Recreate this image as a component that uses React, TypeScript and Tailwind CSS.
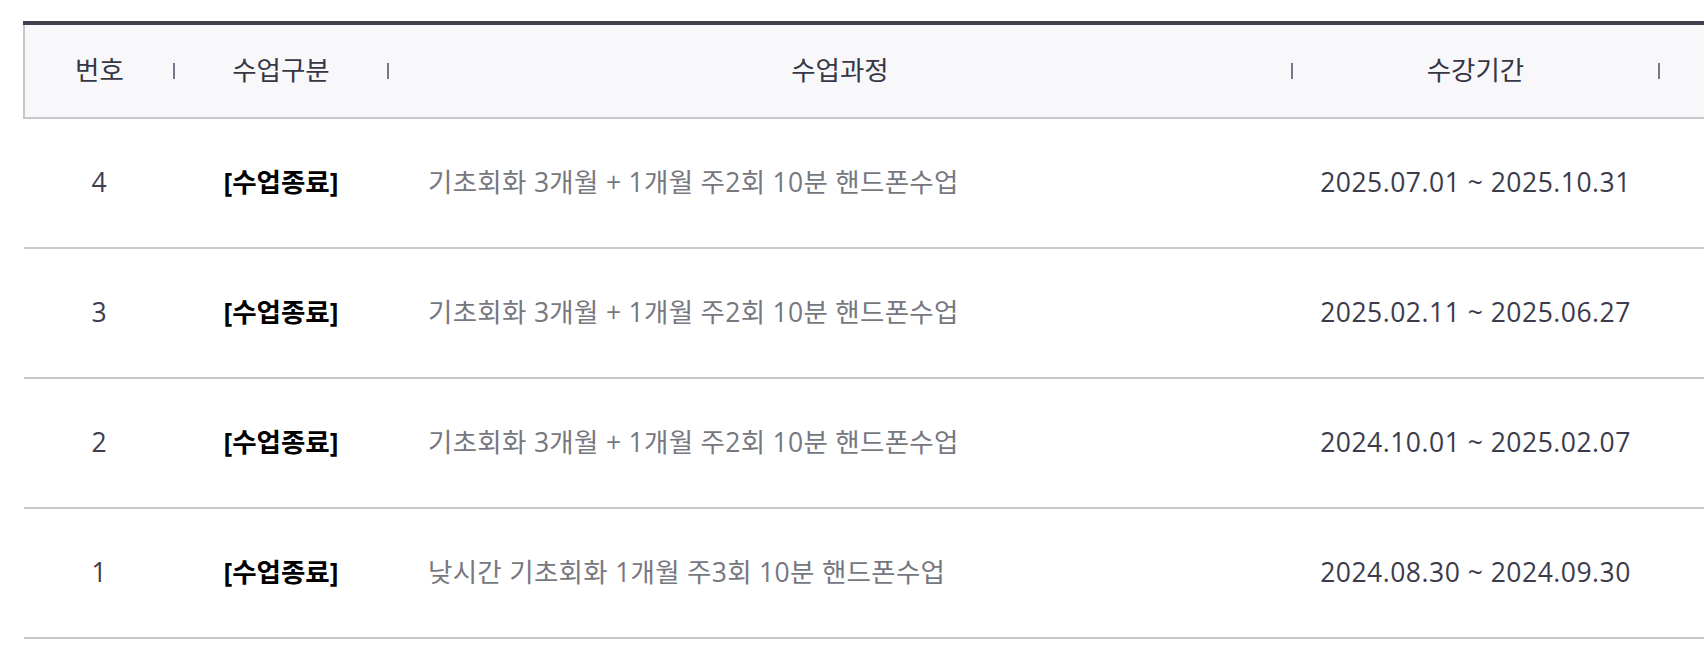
import React from 'react';

type Row = { no: number; status: string; course: string; period: string };

const rows: Row[] = [
  { no: 4, status: '[수업종료]', course: '기초회화 3개월 + 1개월 주2회 10분 핸드폰수업', period: '2025.07.01 ~ 2025.10.31' },
  { no: 3, status: '[수업종료]', course: '기초회화 3개월 + 1개월 주2회 10분 핸드폰수업', period: '2025.02.11 ~ 2025.06.27' },
  { no: 2, status: '[수업종료]', course: '기초회화 3개월 + 1개월 주2회 10분 핸드폰수업', period: '2024.10.01 ~ 2025.02.07' },
  { no: 1, status: '[수업종료]', course: '낮시간 기초회화 1개월 주3회 10분 핸드폰수업', period: '2024.08.30 ~ 2024.09.30' },
];

const heads = ['번호', '수업구분', '수업과정', '수강기간', ''];

const App: React.FC = () => {
  return (
    <div className="w-[1704px] h-[660px] bg-white overflow-hidden pt-[21px] pl-[23px] font-['Open_Sans','Noto_Sans_CJK_KR',sans-serif]">
      <table className="table-fixed border-collapse w-[1900px]">
        <colgroup>
          <col className="w-[150px]" />
          <col className="w-[214px]" />
          <col className="w-[904px]" />
          <col className="w-[367px]" />
          <col className="w-[265px]" />
        </colgroup>
        <thead>
          <tr className="bg-[#f8f8fa] border-t-4 border-t-[#40404f] border-b-2 border-b-[#c8c7cc] border-l-2 border-l-[#c8c7cc]">
            {heads.map((h, i) => (
              <th key={i} className="relative h-[95px] p-0 text-center text-[26.5px] font-normal text-[#363646]">
                {h}
                {i < 4 && (
                  <span className="absolute right-[-1px] top-1/2 -translate-y-1/2 w-[2px] h-4 bg-[#77778a]"></span>
                )}
              </th>
            ))}
          </tr>
        </thead>
        <tbody>
          {rows.map((r) => (
            <tr key={r.no} className="border-b-2 border-b-[#c8c7cc]">
              <td className="h-[130px] p-0 text-center text-[26.5px] text-[#3d3d4f]">{r.no}</td>
              <td className="p-0 text-center text-[26.5px] font-bold text-black">{r.status}</td>
              <td className="p-0 pl-10 text-left text-[26.5px] tracking-[0.3px] text-[#77777f]">{r.course}</td>
              <td className="p-0 text-center text-[26.5px] tracking-[0.5px] text-[#3b3b4c]">{r.period}</td>
              <td className="p-0"></td>
            </tr>
          ))}
        </tbody>
      </table>
    </div>
  );
};

export default App;
